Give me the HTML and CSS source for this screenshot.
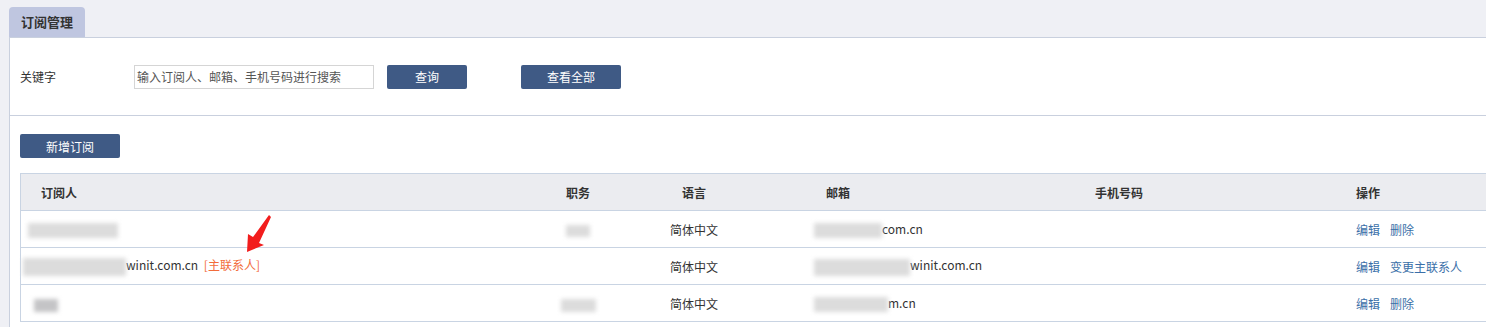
FILE: index.html
```html
<!DOCTYPE html>
<html lang="zh-CN">
  <head>
    <meta charset="UTF-8" />
    <title>订阅管理</title>
    <link rel="stylesheet" href="styles.css">
  </head>
  <body>
    <div class="tabs">
      <div class="tab">订阅管理</div>
    </div>

    <div class="panel">
      <div class="search">
        <span class="label">关键字</span>
        <input type="text" class="keyword" placeholder="输入订阅人、邮箱、手机号码进行搜索" />
        <button class="btn btn_query">查询</button>
        <button class="btn btn_all">查看全部</button>
      </div>

      <div class="list">
        <button class="btn btn_add">新增订阅</button>

        <table class="grid">
          <thead>
            <tr>
              <th class="c_name">订阅人</th>
              <th class="c_job">职务</th>
              <th class="c_lang">语言</th>
              <th class="c_mail head_mail">邮箱</th>
              <th class="c_phone">手机号码</th>
              <th class="c_op">操作</th>
            </tr>
          </thead>
          <tbody>
            <tr>
              <td class="c_name">
                <span class="blur blur_name1"></span>
              </td>
              <td class="c_job"><span class="blur blur_job1"></span></td>
              <td class="c_lang">简体中文</td>
              <td class="c_mail"><span class="blur blur_mail1"></span>com.cn</td>
              <td class="c_phone"></td>
              <td class="c_op"><a href="#">编辑</a><a href="#">删除</a></td>
            </tr>
            <tr>
              <td class="c_name">
                <span class="blur blur_name2"></span>winit.com.cn
                <span class="main_tag">[主联系人]</span>
              </td>
              <td class="c_job"></td>
              <td class="c_lang">简体中文</td>
              <td class="c_mail"><span class="blur blur_mail2"></span>winit.com.cn</td>
              <td class="c_phone"></td>
              <td class="c_op"><a href="#">编辑</a><a href="#">变更主联系人</a></td>
            </tr>
            <tr>
              <td class="c_name">
                <span class="blur blur_name3"></span>
              </td>
              <td class="c_job"><span class="blur blur_job3"></span></td>
              <td class="c_lang">简体中文</td>
              <td class="c_mail"><span class="blur blur_mail3"></span>m.cn</td>
              <td class="c_phone"></td>
              <td class="c_op"><a href="#">编辑</a><a href="#">删除</a></td>
            </tr>
          </tbody>
        </table>
      </div>
    </div>

    <!-- red annotation arrow pointing at the main contact tag -->
    <svg class="arrow" width="40" height="50" viewBox="0 0 40 50">
      <path d="M29 2 L31 4 L19 30 L24 32 L7 39 L8 21 L13 24 Z" fill="#f21d1d" />
    </svg>
  </body>
</html>
```

FILE: styles.css
```css
html,
body {
  margin: 0;
  overflow: hidden;
}
body {
  background: #eff0f5;
  font-family: "Microsoft YaHei", "Noto Sans CJK SC", sans-serif;
  font-size: 12px;
  color: #333;
  position: relative;
  width: 1486px;
  height: 327px;
}
.tabs {
  padding: 7px 0 0 9px;
  height: 30px;
  display: flex;
}
.tab {
  background: #bfc6e0;
  border-radius: 4px 4px 0 0;
  width: 76px;
  height: 30px;
  line-height: 30px;
  text-align: center;
  font-size: 13px;
  font-weight: bold;
  color: #333;
}
.panel {
  margin-left: 9px;
  width: 1500px;
  background: #fff;
  border-top: 1px solid #c9d0de;
  border-left: 1px solid #c9d0de;
  height: 300px;
}
.search {
  display: flex;
  align-items: center;
  height: 77px;
  padding-left: 10px;
  border-bottom: 1px solid #c9d0de;
}
.label {
  width: 114px;
}
.keyword {
  box-sizing: border-box;
  width: 240px;
  height: 24px;
  border: 1px solid #d5d5d5;
  padding: 0 2px;
  font-family: inherit;
  font-size: 12px;
  outline: 0;
}
.keyword::placeholder {
  color: #555;
}
.btn {
  border: none;
  border-radius: 2px;
  background: #3f5a85;
  color: #fff;
  font-family: inherit;
  font-size: 12px;
  height: 24px;
  width: 80px;
  padding: 0;
}
.btn_query {
  margin-left: 13px;
}
.btn_all {
  margin-left: 54px;
  width: 100px;
}
.list {
  padding: 18px 0 0 10px;
}
.btn_add {
  width: 100px;
  display: block;
}
.grid {
  margin-top: 15px;
  border-collapse: collapse;
  table-layout: fixed;
  width: 1480px;
}
.grid th,
.grid td {
  border-top: 1px solid #c9d4e3;
  border-bottom: 1px solid #c9d4e3;
  padding: 0;
  white-space: nowrap;
}
.grid th {
  background: #ebecf0;
  height: 36px;
  font-weight: bold;
  color: #333;
}
.grid td {
  height: 36px;
  color: #333;
}
.grid tr > :first-child {
  border-left: 1px solid #c9d4e3;
}
.c_name {
  width: 480px;
  text-align: left;
  padding-left: 20px !important;
}
.grid td.c_name {
  padding-left: 12px !important;
}
.c_job {
  width: 114px;
  text-align: center;
}
.c_lang {
  width: 118px;
  text-align: center;
}
.c_mail {
  text-align: left;
  padding-left: 61px !important;
}
.grid th.head_mail {
  padding-left: 73px !important;
  width: 175px;
}
.c_phone {
  width: 236px;
  text-align: center;
}
.c_op {
  text-align: left;
  padding-left: 119px !important;
}
.c_op a {
  color: #3a6fa8;
  text-decoration: none;
  margin-right: 10px;
}
.main_tag {
  color: #f26c3b;
  margin-left: 3px;
}
.blur {
  display: inline-block;
  vertical-align: middle;
  background: #dcdcdc;
  filter: blur(2px);
  height: 15px;
}
.blur_name1 {
  width: 90px;
  margin-left: -5px;
}
.blur_name2 {
  width: 103px;
  height: 18px;
  margin-left: -10px;
}
.blur_name3 {
  width: 24px;
  height: 13px;
  margin-left: 1px;
  background: #c4c4c6;
}
.blur_job1 {
  width: 24px;
  height: 12px;
}
.blur_job3 {
  width: 35px;
  height: 13px;
}
.blur_mail1 {
  width: 68px;
}
.blur_mail2 {
  width: 96px;
  height: 17px;
}
.blur_mail3 {
  width: 74px;
}
.arrow {
  position: absolute;
  left: 240px;
  top: 213px;
}
```
